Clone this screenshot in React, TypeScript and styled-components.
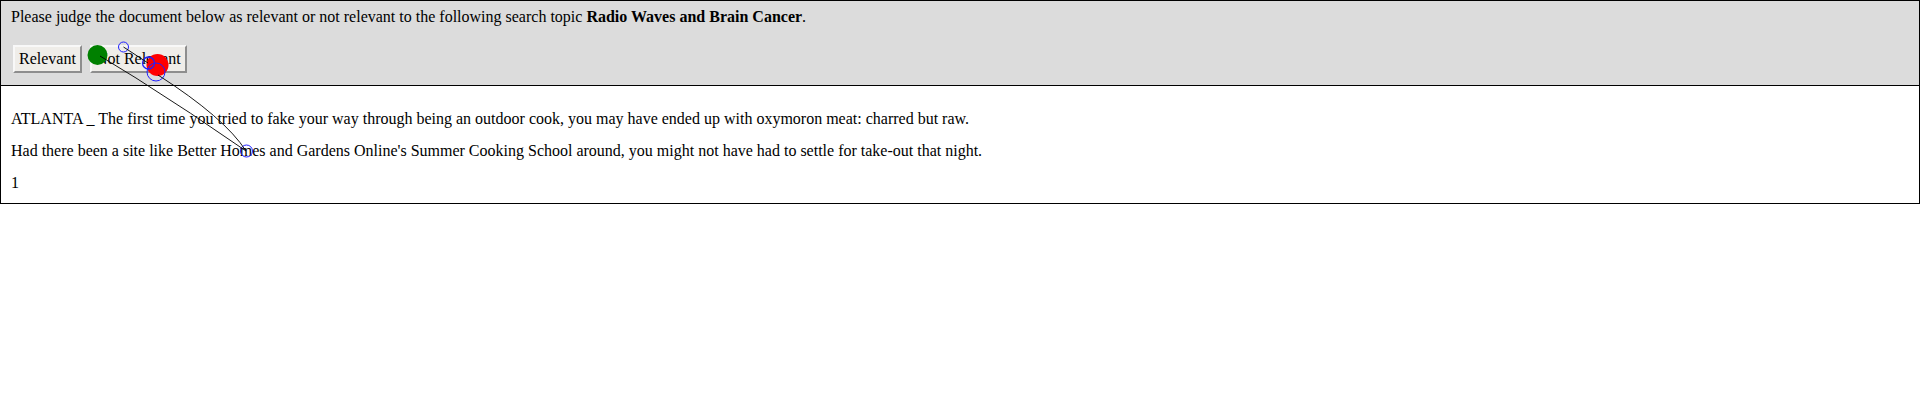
import React from "react";
import styled, { createGlobalStyle } from "styled-components";

const Global = createGlobalStyle`
  html, body { margin: 0; padding: 0; background: #ffffff; }
  body { font-family: "Liberation Serif", "Times New Roman", serif; font-size: 16px; color: #000; }
`;

const Page = styled.div`
  position: relative;
  width: 1920px;
`;

const Header = styled.div`
  background: #dcdcdc;
  border: 1px solid #000;
  padding: 7px 10px 12px 10px;
  display: flex;
  flex-direction: column;
  gap: 19px;
`;

const Prompt = styled.div`
  line-height: 18px;
  height: 18px;
`;

const Buttons = styled.div`
  display: flex;
  gap: 8px;
  margin-left: 2px;
`;

const JudgeButton = styled.button`
  font-family: "Liberation Serif", "Times New Roman", serif;
  font-size: 16px;
  color: #000;
  height: 28px;
  line-height: 18px;
  padding: 0 4px;
  border: 2px solid;
  border-color: #f8f8f8 #8e8e8e #8e8e8e #f8f8f8;
  background: #efede9;
  margin: 0;
  cursor: pointer;
`;

const Doc = styled.div`
  border: 1px solid #000;
  border-top: none;
  padding: 24px 10px 11px 10px;
  display: flex;
  flex-direction: column;
  gap: 14px;
`;

const Para = styled.div`
  line-height: 18px;
  height: 18px;
`;

const Overlay = styled.svg`
  position: absolute;
  left: 0;
  top: 0;
  pointer-events: none;
  overflow: visible;
`;

export default function App() {
  return (
    <Page>
      <Global />
      <Header>
        <Prompt>
          Please judge the document below as relevant or not relevant to the
          following search topic <b>Radio Waves and Brain Cancer</b>.
        </Prompt>
        <Buttons>
          <JudgeButton>Relevant</JudgeButton>
          <JudgeButton>Not Relevant</JudgeButton>
        </Buttons>
      </Header>
      <Doc>
        <Para>
          ATLANTA _ The first time you tried to fake your way through being an
          outdoor cook, you may have ended up with oxymoron meat: charred but raw.
        </Para>
        <Para>
          Had there been a site like Better Homes and Gardens Online's Summer
          Cooking School around, you might not have had to settle for take-out
          that night.
        </Para>
        <Para>1</Para>
      </Doc>
      <Overlay width="400" height="220" viewBox="0 0 400 220">
        <circle cx="97.5" cy="55" r="10" fill="#008000" />
        <circle cx="157.5" cy="65" r="11" fill="#ff0000" />
        <circle cx="123.5" cy="47" r="5" fill="none" stroke="#2020ff" strokeWidth="1" />
        <circle cx="148.5" cy="63" r="6" fill="none" stroke="#2020ff" strokeWidth="1.3" />
        <circle cx="156" cy="72" r="9" fill="none" stroke="#2020ff" strokeWidth="1" />
        <circle cx="246.5" cy="151" r="6" fill="none" stroke="#2020ff" strokeWidth="1" />
        <path d="M100 56 L136 78 Q190 112 246 151" fill="none" stroke="#000" strokeWidth="0.9" />
        <path d="M158 75 Q225 118 246 151" fill="none" stroke="#000" strokeWidth="0.9" />
        <path d="M123.5 47 L148 63" fill="none" stroke="#000" strokeWidth="0.9" />
      </Overlay>
    </Page>
  );
}
